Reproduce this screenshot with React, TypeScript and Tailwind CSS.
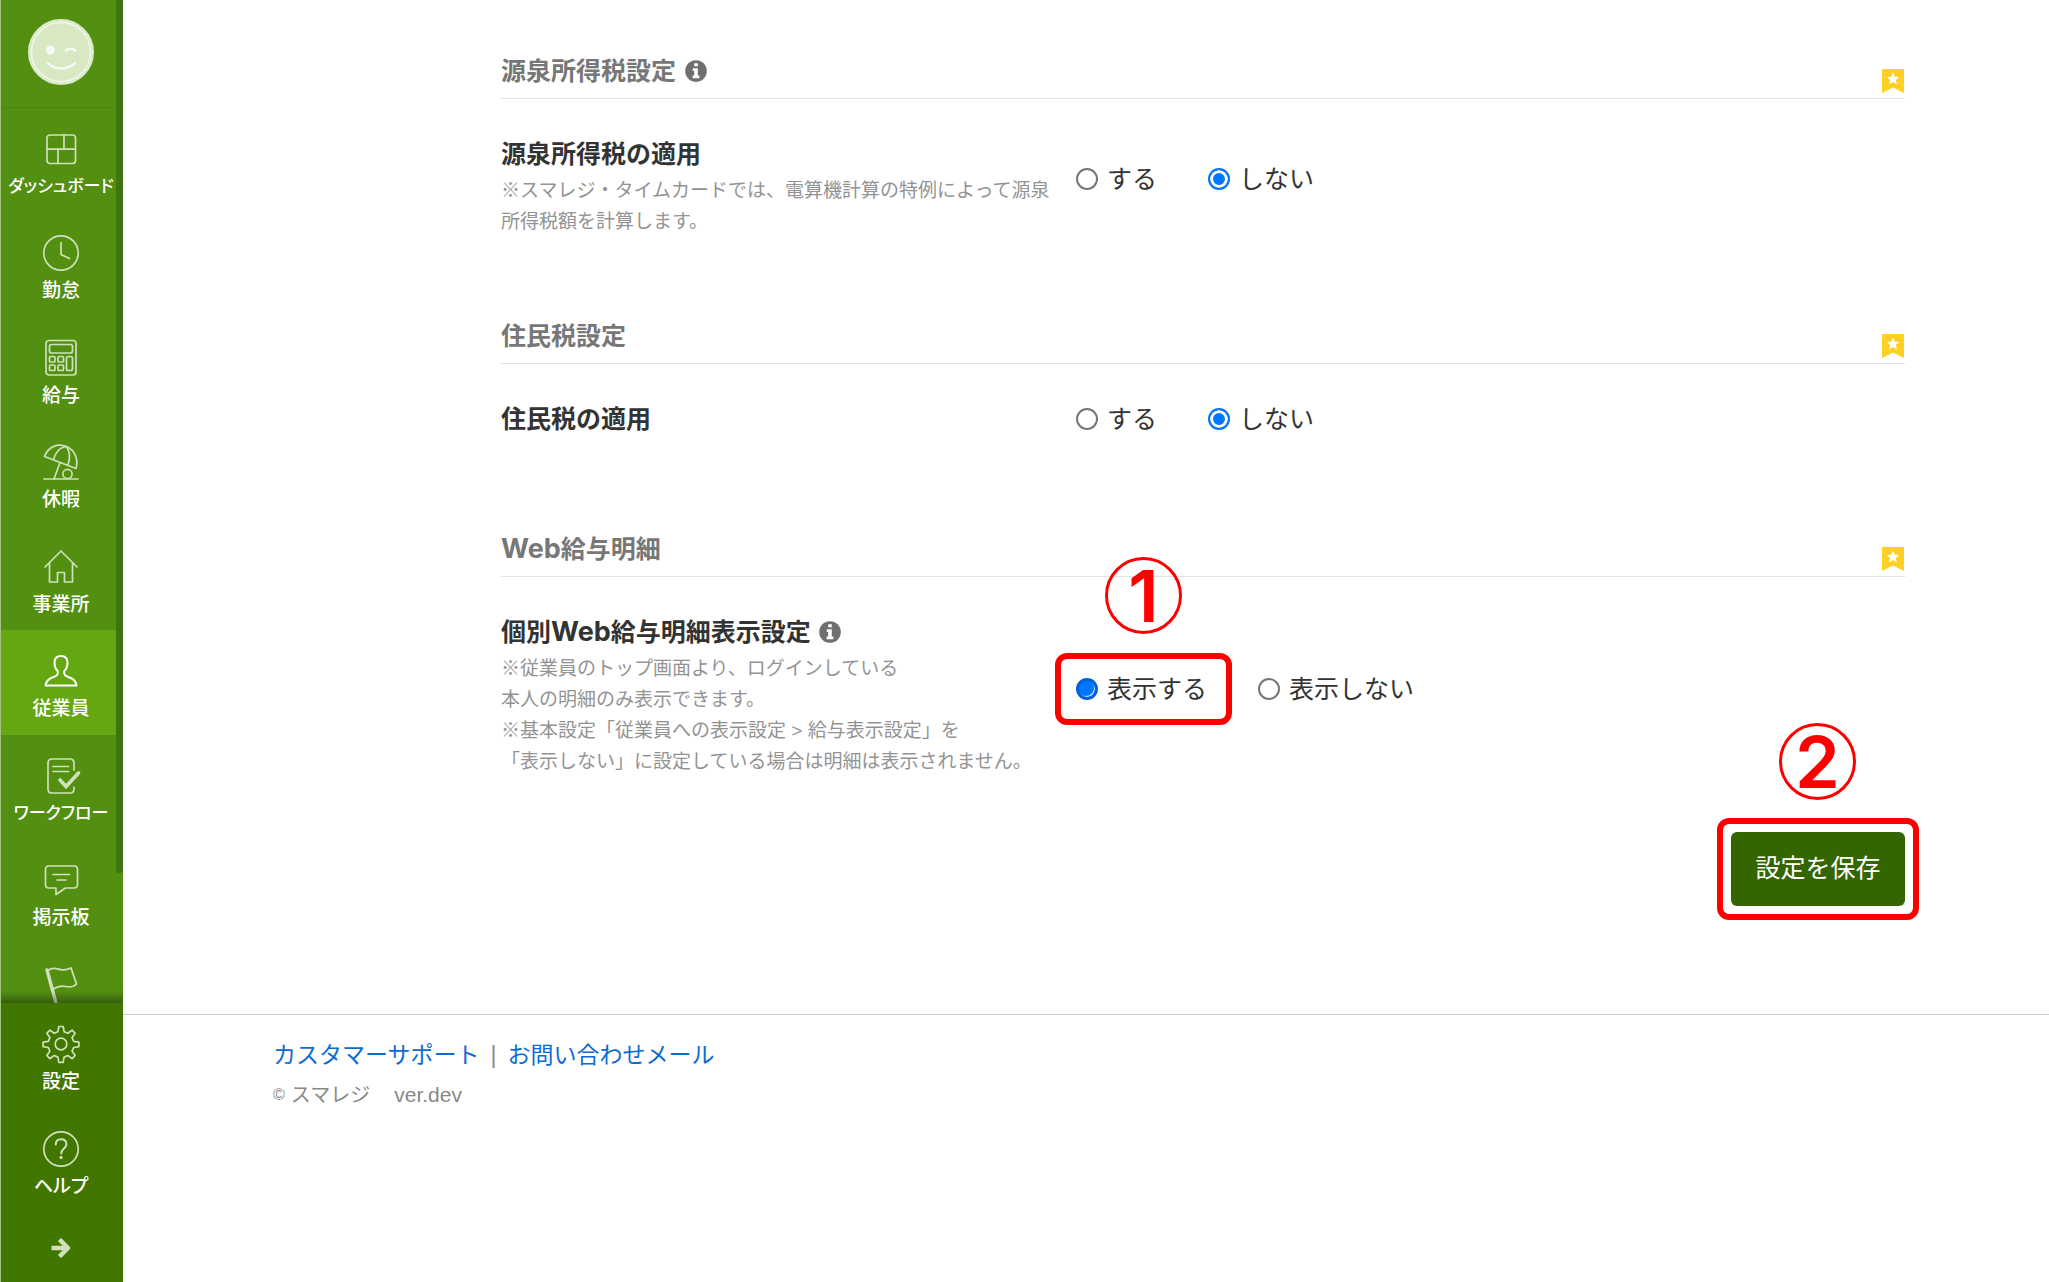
import type { ReactNode } from "react";

function Icon({ children, active = false }: { children: ReactNode; active?: boolean }) {
  return (
    <svg
      viewBox="0 0 40 40"
      aria-hidden="true"
      className={`size-10 shrink-0 ${active ? "text-white" : "text-[#cfe0bb]"}`}
      fill="none"
      stroke="currentColor"
      strokeWidth={active ? 2 : 1.7}
      strokeLinejoin="round"
      strokeLinecap="round"
    >
      {children}
    </svg>
  );
}

const dashboard = (
  <>
    <rect x="6" y="6" width="28.5" height="28.5" rx="3" />
    <path d="M6 20.2h28.5M23 6v14.2M17 20.2v14.3" />
  </>
);
const clock = (
  <>
    <circle cx="20" cy="20" r="17.2" />
    <path d="M20 9.5v12l8.5 4" />
  </>
);
const calculator = (
  <>
    <rect x="5" y="2.5" width="30" height="34.5" rx="3" />
    <rect x="8.500" y="6.500" width="23" height="8.500" rx="2" />
    <rect x="8.500" y="18.500" width="5.500" height="5.500" rx="1" />
    <rect x="17" y="18.500" width="5.500" height="5.500" rx="1" />
    <rect x="8.500" y="27" width="5.500" height="5.500" rx="1" />
    <rect x="17" y="27" width="5.500" height="5.500" rx="1" />
    <rect x="25.500" y="18.500" width="6" height="14" rx="2" />
  </>
);
const umbrella = (
  <>
    <path d="M3.5 14.5C7.500 4.500 17 .8 25.500 4.500c8.500 3.800 12 12.500 9.500 22L3.500 14.500z" />
    <path d="M12.500 17.500C14 11 19 5 25.500 4.500c3.500 5 3.500 12 1.500 18.500M19 20.500L13 37" />
    <circle cx="26.500" cy="32" r="4.600" />
    <path d="M3 37h34" />
  </>
);
const house = <path d="M4 20L20 4l16 16M8.500 16.500V35h8v-9.500h7V35h8V16.500" />;
const person = (
  <path d="M20 5c-4.500 0-6.500 3-6.500 6.500 0 4 .8 6.500 3.200 8.500.9 4-1 5-4 6-4.500 1.500-7.700 3.500-8.200 8.500h31c-.5-5-3.700-7-8.200-8.500-3-1-4.900-2-4-6 2.400-2 3.200-4.500 3.200-8.500C26.500 8 24.500 5 20 5z" />
);
const workflow = (
  <>
    <path d="M33 14V7c0-2.500-1.500-4-4-4H11C8.500 3 7 4.500 7 7v26c0 2.500 1.500 4 4 4h18c2.500 0 4-1.500 4-4v-2M12 10.500h15.500M12 15.500h15.500" />
    <path d="M19 24l6 6.500L37.500 17" strokeWidth="3.600" strokeLinejoin="miter" />
  </>
);
const bulletin = (
  <>
    <path d="M8 6h25c2 0 3.500 1.500 3.500 3.500v15c0 2-1.500 3.500-3.500 3.500h-8.500L15 34.500V28H8c-2 0-3.500-1.500-3.500-3.500v-15C4.500 7.500 6 6 8 6z" />
    <path d="M12 14.500h16.500M16 20h9" />
  </>
);
const flag = (
  <>
    <path d="M6 5l9 33" strokeWidth="3.400" />
    <path d="M7 5.500c5-4 9-1.500 13-.8 4 .6 7-.2 10-1.700l5.500 16c-3 3-6.500 3.500-10.500 2.500-4.500-1-8-.5-13 2.500" />
  </>
);
const gear = (
  <>
    <circle cx="20" cy="20" r="5.800" />
    <path d="M17.800 2.500h4.400l.9 5.200 3.700 1.600 4.300-3.100 3.100 3.100-3.100 4.300 1.600 3.700 5.200.9v4.400l-5.200.9-1.600 3.700 3.100 4.300-3.100 3.100-4.300-3.100-3.700 1.600-.9 5.200h-4.400l-.9-5.200-3.700-1.600-4.300 3.100-3.100-3.100 3.100-4.300-1.600-3.700-5.200-.9v-4.400l5.200-.9 1.600-3.700-3.100-4.300 3.100-3.100 4.300 3.100 3.700-1.600z" />
  </>
);
const help = (
  <>
    <circle cx="20" cy="20" r="17.200" />
    <path d="M14.800 15.500c0-3.500 2.200-5.200 5.200-5.200s5.400 1.700 5.400 4.900c0 4.300-5.200 4.300-5.200 9.300" strokeWidth="2" />
    <circle cx="20.100" cy="28.500" r=".8" fill="currentColor" />
  </>
);

function NavItem({
  label,
  icon,
  active = false,
  compact = false,
  iconOnly = false,
}: {
  label: string;
  icon: ReactNode;
  active?: boolean;
  compact?: boolean;
  iconOnly?: boolean;
}) {
  return (
    <li className={`min-h-0 flex-1 ${active ? "bg-[#65a713]" : ""}`}>
      <a href="#" aria-label={label} className="flex h-full flex-col items-center pt-[21px] pr-0.5">
        <Icon active={active}>{icon}</Icon>
        {!iconOnly && (
          <span
            className={`mt-1 leading-7 font-medium whitespace-nowrap text-white [font-feature-settings:'palt'] ${
              compact ? "text-[17px]" : "text-[19px]"
            }`}
          >
            {label}
          </span>
        )}
      </a>
    </li>
  );
}

function Sidebar() {
  return (
    <nav
      aria-label="メインメニュー"
      className="flex h-screen w-[123px] shrink-0 flex-col border-l border-[#a3c282] bg-[#539011]"
    >
      <div className="relative flex min-h-0 flex-1 flex-col overflow-hidden">
        <div className="flex h-[108px] shrink-0 justify-center border-b border-[#498311] pt-[19px] pr-0.5">
          <svg viewBox="0 0 66 66" className="size-[66px]" role="img" aria-label="ユーザー">
            <circle cx="33" cy="33" r="31.5" fill="#d7e8c3" stroke="#dce9cc" strokeWidth="3" />
            <circle cx="33" cy="33" r="29.5" fill="none" stroke="#f0f5e8" strokeWidth="1.5" />
            <circle cx="22.5" cy="31" r="4.5" fill="#f6faf2" />
            <path
              d="M38 31.500q4.500-3.500 9 0M20 44.500q13 10 27 0"
              fill="none"
              stroke="#f6faf2"
              strokeWidth="2.5"
              strokeLinecap="round"
            />
          </svg>
        </div>
        <ul className="flex h-[940px] shrink-0 flex-col">
          <NavItem label="ダッシュボード" icon={dashboard} compact />
          <NavItem label="勤怠" icon={clock} />
          <NavItem label="給与" icon={calculator} />
          <NavItem label="休暇" icon={umbrella} />
          <NavItem label="事業所" icon={house} />
          <NavItem label="従業員" icon={person} active />
          <NavItem label="ワークフロー" icon={workflow} compact />
          <NavItem label="掲示板" icon={bulletin} />
          <NavItem label="お知らせ" icon={flag} iconOnly />
        </ul>
        <div className="absolute top-0 right-0 h-[873px] w-[7px] rounded-b bg-[#3f7510]" />
        <div className="absolute inset-x-0 bottom-0 h-3 bg-gradient-to-b from-transparent to-black/35" />
      </div>
      <div className="flex h-[279px] shrink-0 flex-col bg-[#417600]">
        <ul className="flex h-[209px] flex-col">
          <NavItem label="設定" icon={gear} />
          <NavItem label="ヘルプ" icon={help} />
        </ul>
        <button type="button" aria-label="メニューを広げる" className="mt-[26px] flex justify-center pr-0.5">
          <svg viewBox="0 0 20 20" className="size-5" fill="none" stroke="#cfe0bb" strokeWidth="4.500">
            <path d="M.5 10H16M8.500 1.500L17 10l-8.500 8.500" strokeLinejoin="round" />
          </svg>
        </button>
      </div>
    </nav>
  );
}

function Info() {
  return (
    <svg viewBox="0 0 22 22" className="size-[22px]" role="img" aria-label="説明">
      <circle cx="11" cy="11" r="10.800" fill="#716f6f" />
      <path d="M9.200 3.200h3.600v3H9.200zM7.800 8.200h5v7.300H14.400v2.700H7.600v-2.700h1.600v-4.600H7.800z" fill="#fff" />
    </svg>
  );
}

function Bookmark() {
  return (
    <svg viewBox="0 0 22 24" className="mb-[5px] h-6 w-[22px]" role="img" aria-label="ブックマーク">
      <path d="M0 0h22v24l-11-5.500L0 24z" fill="#fdd023" />
      <path d="M11 3.500l1.800 4.200 4.500.4-3.400 3 1 4.400-3.900-2.400-3.900 2.400 1-4.400-3.400-3 4.500-.4z" fill="#fff" />
    </svg>
  );
}

function SectionHeader({ title, info = false }: { title: ReactNode; info?: boolean }) {
  return (
    <div className="flex h-[50px] items-end justify-between border-b border-[#e2e2e2] pr-px">
      <h2 className="flex items-center gap-[9px] self-start text-[25px] leading-[44px] font-bold text-[#777]">
        <span>{title}</span>
        {info && <Info />}
      </h2>
      <Bookmark />
    </div>
  );
}

function Radio({
  name,
  label,
  checked = false,
  marked = false,
}: {
  name: string;
  label: string;
  checked?: boolean;
  marked?: boolean;
}) {
  return (
    <label className="relative flex items-center gap-[9px] text-[25px] leading-[38px] text-[#333]">
      <input
        type="radio"
        name={name}
        defaultChecked={checked}
        className={`size-[22px] appearance-none rounded-full border-2 border-[#767676] bg-white checked:bg-[#0075ff] ${
          marked
            ? "checked:border-[3px] checked:border-[#0062d6] checked:shadow-[inset_-1px_-1px_0_0_#cfe4ff]"
            : "checked:border-[#0075ff] checked:shadow-[inset_0_0_0_3px_white]"
        }`}
      />
      <span>{label}</span>
      {marked && (
        <>
          <span className="pointer-events-none absolute -top-[17px] -right-[25px] -bottom-[17px] -left-[21px] rounded-xl border-[6px] border-[#f00]" />
          <StepNumber className="-top-[113px] left-[29px]">1</StepNumber>
        </>
      )}
    </label>
  );
}

function StepNumber({ children, className }: { children: string; className: string }) {
  return (
    <span
      className={`pointer-events-none absolute flex size-[77px] items-center justify-center rounded-full border-[3px] border-[#f00] font-[Inter,sans-serif] text-[72px] leading-none font-semibold text-[#f00] ${className}`}
    >
      {children}
    </span>
  );
}

const web = <span className="font-[Inter,sans-serif] text-[27px]">Web</span>;

export default function App() {
  return (
    <div
      lang="ja"
      className="flex min-h-screen bg-white font-['Liberation_Sans','Noto_Sans_CJK_JP',sans-serif] text-[#333]"
    >
      <Sidebar />
      <div className="flex min-w-0 flex-1 flex-col">
        <main className="flex flex-col pt-[49px] pr-[144px] pb-[108px] pl-[378px]">
          <section>
            <SectionHeader title="源泉所得税設定" info />
            <div className="flex items-center gap-6 pt-9">
              <div className="w-[551px] shrink-0">
                <h3 className="text-[25px] leading-[38px] font-bold">源泉所得税の適用</h3>
                <p className="mt-[2px] text-[19px] leading-[31px] text-[#939393]">
                  ※スマレジ・タイムカードでは、電算機計算の特例によって源泉所得税額を計算します。
                </p>
              </div>
              <div className="flex gap-[51px] pb-[14px]">
                <Radio name="income" label="する" />
                <Radio name="income" label="しない" checked />
              </div>
            </div>
          </section>

          <section className="mt-[77px]">
            <SectionHeader title="住民税設定" />
            <div className="flex items-center gap-6 pt-9">
              <h3 className="w-[551px] shrink-0 text-[25px] leading-[38px] font-bold">住民税の適用</h3>
              <div className="flex gap-[51px]">
                <Radio name="resident" label="する" />
                <Radio name="resident" label="しない" checked />
              </div>
            </div>
          </section>

          <section className="mt-[89px]">
            <SectionHeader title={<>{web}給与明細</>} />
            <div className="flex items-center gap-6 pt-9">
              <div className="w-[551px] shrink-0">
                <h3 className="flex items-center gap-2 text-[25px] leading-[38px] font-bold">
                  <span>個別{web}給与明細表示設定</span>
                  <Info />
                </h3>
                <p className="mt-[2px] text-[19px] leading-[31px] text-[#939393]">
                  ※従業員のトップ画面より、ログインしている
                  <br />
                  本人の明細のみ表示できます。
                  <br />
                  ※基本設定「従業員への表示設定 &gt; 給与表示設定」を
                  <br />
                  「表示しない」に設定している場合は明細は表示されません。
                </p>
              </div>
              <div className="flex gap-[51px] pb-3">
                <Radio name="payslip" label="表示する" checked marked />
                <Radio name="payslip" label="表示しない" />
              </div>
            </div>
          </section>

          <div className="relative mt-[55px] self-end">
            <button
              type="button"
              className="block h-[74px] w-[174px] rounded-md bg-[#360] text-[25px] text-white"
            >
              設定を保存
            </button>
            <span className="pointer-events-none absolute -inset-[14px] rounded-xl border-[6px] border-[#f00]" />
            <StepNumber className="-top-[109px] left-[48px]">2</StepNumber>
          </div>
        </main>

        <footer className="border-t border-[#ccc] pt-[22px] pl-[150px] text-[#888]">
          <div className="flex gap-[11px] text-[23px] leading-9">
            <a href="#" className="text-[#0b6bd3]">
              カスタマーサポート
            </a>
            <span>|</span>
            <a href="#" className="text-[#0b6bd3]">
              お問い合わせメール
            </a>
          </div>
          <p className="mt-1 flex items-center text-xl leading-9">
            <span className="mr-1.5 text-base">©</span>
            <span>スマレジ</span>
            <span className="ml-6 text-[21px]">ver.dev</span>
          </p>
        </footer>
      </div>
    </div>
  );
}
